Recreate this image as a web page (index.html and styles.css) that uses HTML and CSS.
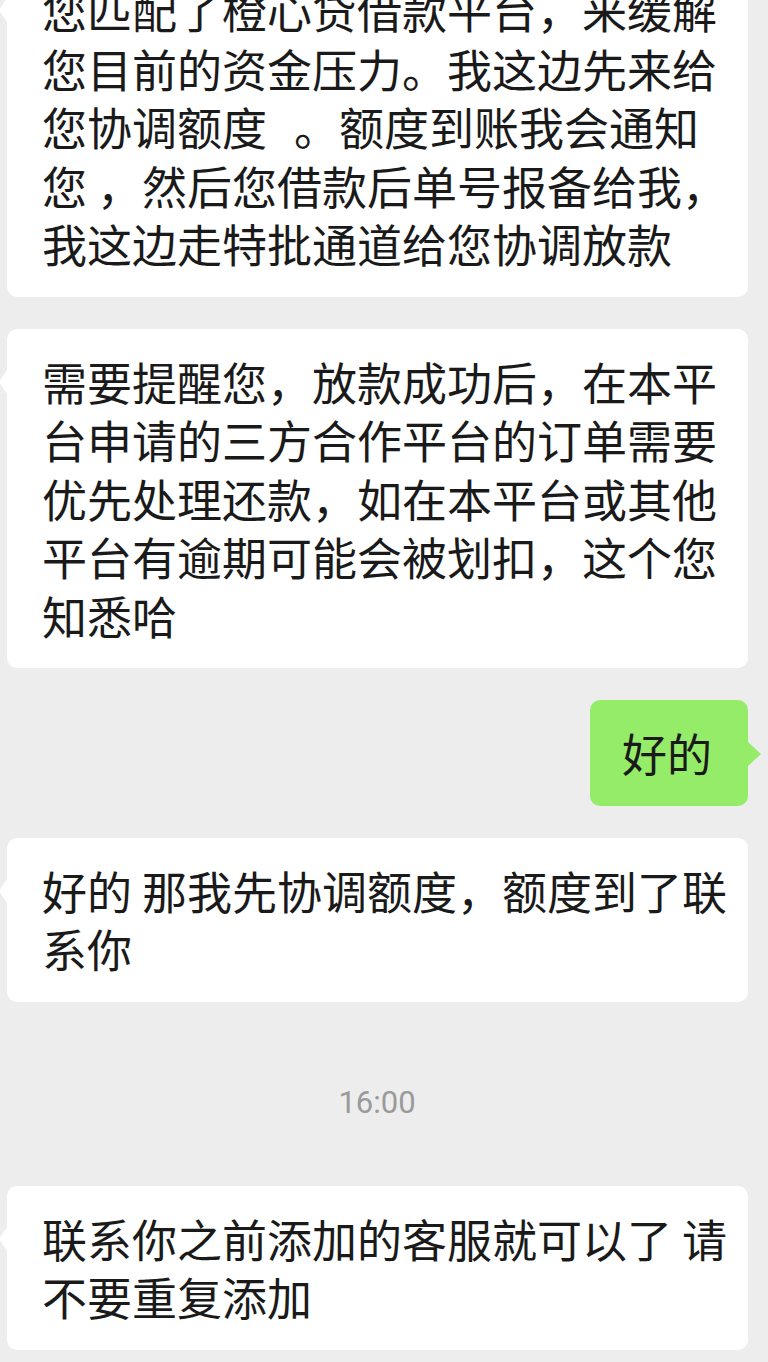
FILE: index.html
```html
<!DOCTYPE html>
<html lang="zh-CN">
<head>
<meta charset="utf-8">
<title>聊天</title>
<link rel="stylesheet" href="styles.css">
</head>
<body>
<main class="chat">
  <div class="msg msg-in msg-first">
    <div class="bubble">您匹配了橙心贷借款平台，来缓解<br>您目前的资金压力。我这边先来给<br>您协调额度<span class="gap"> </span>。额度到账我会通知<br>您 ，然后您借款后单号报备给我，<br>我这边走特批通道给您协调放款</div>
  </div>
  <div class="msg msg-in">
    <div class="bubble">需要提醒您，放款成功后，在本平<br>台申请的三方合作平台的订单需要<br>优先处理还款，如在本平台或其他<br>平台有逾期可能会被划扣，这个您<br>知悉哈</div>
  </div>
  <div class="msg msg-out">
    <div class="bubble bubble-green">好的</div>
  </div>
  <div class="msg msg-in">
    <div class="bubble">好的 那我先协调额度，额度到了联<br>系你</div>
  </div>
  <div class="time">16:00</div>
  <div class="msg msg-in">
    <div class="bubble">联系你之前添加的客服就可以了 请<br>不要重复添加</div>
  </div>
</main>
</body>
</html>
```

FILE: styles.css
```css
html, body {
  margin: 0;
  padding: 0;
  background: #ededed;
}

body {
  width: 768px;
  height: 1362px;
  overflow: hidden;
  font-family: "Noto Sans CJK SC", "Noto Sans", sans-serif;
  color: #1a1a1a;
}

.chat {
  display: flex;
  flex-direction: column;
  gap: 32px;
}

.msg {
  display: flex;
}

.msg-first {
  margin-top: -43px;
}

.msg-in {
  justify-content: flex-start;
  padding-left: 7px;
}

.msg-out {
  justify-content: flex-end;
  padding-right: 20px;
}

.bubble {
  position: relative;
  box-sizing: border-box;
  width: 741px;
  padding: 24px 20px 23px 35px;
  background: #ffffff;
  border-radius: 10px;
  font-size: 45px;
  line-height: 58.5px;
  white-space: nowrap;
}

.gap {
  display: inline-block;
  width: 27px;
}

.msg-in .bubble::before {
  content: "";
  position: absolute;
  left: -8px;
  top: 41px;
  width: 0;
  height: 0;
  border-top: 12px solid transparent;
  border-bottom: 12px solid transparent;
  border-right: 8px solid #ffffff;
}

.bubble-green {
  width: auto;
  padding: 24px 36px 23px 32px;
  background: #95ec69;
}

.msg-out .bubble-green::after {
  content: "";
  position: absolute;
  right: -13px;
  top: 42px;
  width: 0;
  height: 0;
  border-top: 12px solid transparent;
  border-bottom: 12px solid transparent;
  border-left: 13px solid #95ec69;
}

.time {
  margin: 49px 0 31px;
  padding-right: 14px;
  text-align: center;
  font-family: Roboto, "Noto Sans", sans-serif;
  font-size: 31px;
  line-height: 40px;
  color: #9a9a9a;
}
```
